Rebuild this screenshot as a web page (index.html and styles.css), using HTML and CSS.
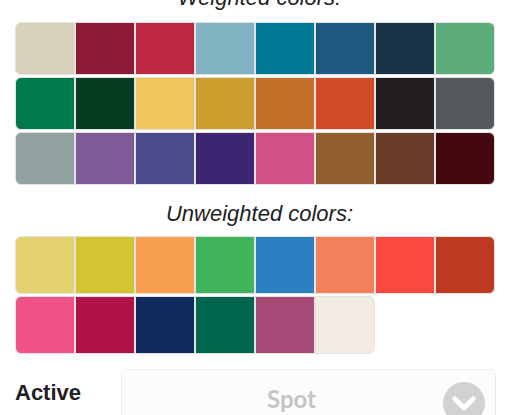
FILE: index.html
```html
<!DOCTYPE html>
<html>
<head>
<meta charset="utf-8">
<link rel="stylesheet" href="styles.css">
</head>
<body>
<div class="page">
  <h2 class="title title-top">Weighted colors:</h2>
  <div class="group group-weighted">
    <div class="row">
      <span class="sw" style="background:#d9d2bb"></span>
      <span class="sw" style="background:#8c1a36"></span>
      <span class="sw" style="background:#bd2742"></span>
      <span class="sw" style="background:#80b4c2"></span>
      <span class="sw" style="background:#007a94"></span>
      <span class="sw" style="background:#1e5a80"></span>
      <span class="sw" style="background:#1a3349"></span>
      <span class="sw" style="background:#5cad7a"></span>
    </div>
    <div class="row">
      <span class="sw" style="background:#007a4b"></span>
      <span class="sw" style="background:#073b22"></span>
      <span class="sw" style="background:#f0c55d"></span>
      <span class="sw" style="background:#cc9e2e"></span>
      <span class="sw" style="background:#c2702a"></span>
      <span class="sw" style="background:#d04c27"></span>
      <span class="sw" style="background:#231f20"></span>
      <span class="sw" style="background:#54575c"></span>
    </div>
    <div class="row">
      <span class="sw" style="background:#92a19f"></span>
      <span class="sw" style="background:#7c5b97"></span>
      <span class="sw" style="background:#4b4b8b"></span>
      <span class="sw" style="background:#3c2571"></span>
      <span class="sw" style="background:#d35086"></span>
      <span class="sw" style="background:#915f2e"></span>
      <span class="sw" style="background:#693c27"></span>
      <span class="sw" style="background:#45080f"></span>
    </div>
  </div>

  <h2 class="title">Unweighted colors:</h2>
  <div class="group group-unweighted">
    <div class="row">
      <span class="sw" style="background:#e3d26e"></span>
      <span class="sw" style="background:#d5c431"></span>
      <span class="sw" style="background:#f89f4f"></span>
      <span class="sw" style="background:#40b45a"></span>
      <span class="sw" style="background:#2b80c1"></span>
      <span class="sw" style="background:#f47f5b"></span>
      <span class="sw" style="background:#fc4840"></span>
      <span class="sw" style="background:#bd3a20"></span>
    </div>
    <div class="row">
      <span class="sw" style="background:#ef5388"></span>
      <span class="sw" style="background:#b01348"></span>
      <span class="sw" style="background:#0e2a5e"></span>
      <span class="sw" style="background:#00664d"></span>
      <span class="sw" style="background:#a84a78"></span>
      <span class="sw" style="background:#f2ece4"></span>
    </div>
  </div>

  <div class="field">
    <label class="field-label">Active</label>
    <div class="select">
      <span class="select-value">Spot</span>
      <span class="select-icon">
        <svg width="42" height="42" viewBox="0 0 42 42">
          <circle cx="21" cy="21" r="21" fill="#d2d2d2"/>
          <path d="M12 17 L21 26 L30 17" fill="none" stroke="#ffffff" stroke-width="5" stroke-linecap="round" stroke-linejoin="round"/>
        </svg>
      </span>
    </div>
  </div>
</div>
</body>
</html>
```

FILE: styles.css
```css
html, body {
  margin: 0;
  padding: 0;
  background: #ffffff;
  overflow: hidden;
}

.page {
  width: 519px;
  height: 415px;
  overflow: hidden;
  font-family: "Liberation Sans", Arial, sans-serif;
  color: #222222;
}

.title {
  margin: 18px 0 0 0;
  font-size: 22px;
  line-height: 22px;
  font-style: italic;
  font-weight: normal;
  text-align: center;
  color: #222222;
}

.title-top {
  margin-top: -13px;
}

.group {
  margin-left: 15px;
  width: 480px;
  display: flex;
  flex-direction: column;
  gap: 2px;
}

.group-weighted {
  margin-top: 13px;
}

.group-unweighted {
  margin-top: 11px;
}

.row {
  display: flex;
}

.sw {
  box-sizing: border-box;
  width: 60px;
  height: 53px;
  border: 1px solid #e3e3e3;
}

.group-unweighted .sw {
  height: 58px;
}

.row .sw:first-child {
  border-top-left-radius: 6px;
  border-bottom-left-radius: 6px;
}

.row .sw:last-child {
  border-top-right-radius: 6px;
  border-bottom-right-radius: 6px;
}

.field {
  display: flex;
  align-items: flex-start;
  margin-top: 15px;
  padding-left: 15px;
}

.field-label {
  width: 106px;
  padding-top: 13px;
  font-size: 22px;
  line-height: 22px;
  font-weight: bold;
  color: #222222;
}

.select {
  box-sizing: border-box;
  width: 375px;
  height: 60px;
  border: 1px solid #ececec;
  border-radius: 6px;
  background: #fcfcfc;
  display: flex;
  align-items: flex-start;
}

.select-value {
  flex: 1;
  padding-top: 17px;
  padding-left: 145px;
  font-family: Lato, "Liberation Sans", sans-serif;
  font-size: 24px;
  line-height: 24px;
  font-weight: bold;
  color: #c4c4c4;
}

.select-icon {
  margin-top: 12px;
  margin-right: 10px;
  width: 42px;
  height: 42px;
}

.select-icon svg {
  display: block;
}
```
